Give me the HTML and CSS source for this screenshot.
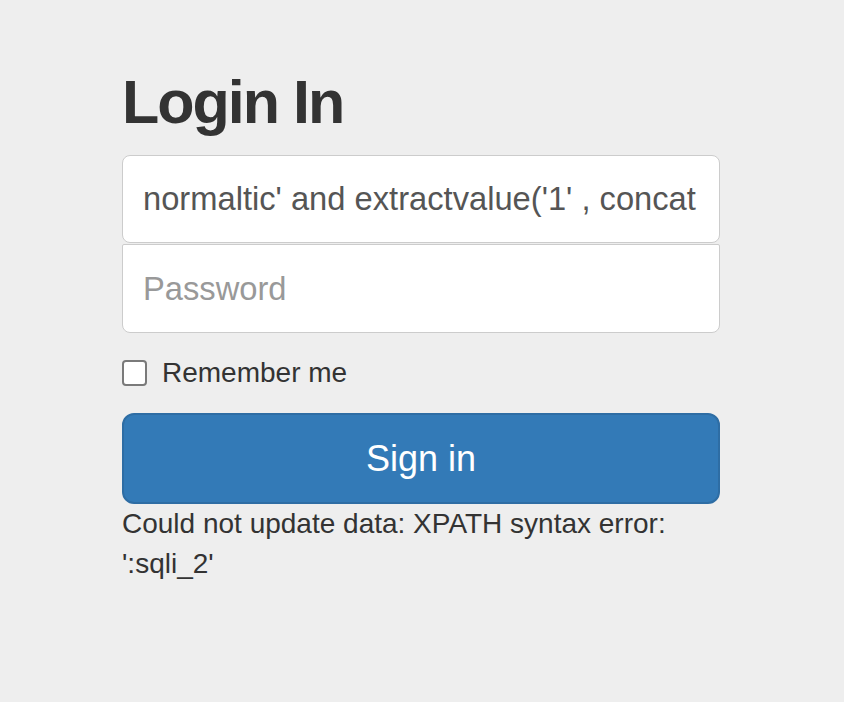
FILE: index.html
```html
<!DOCTYPE html>
<html>
<head>
<meta charset="utf-8">
<link rel="stylesheet" href="styles.css">
</head>
<body>
<div class="container">
  <form class="form-signin">
    <h2 class="heading">Login In</h2>
    <input class="field field-top" type="text" value="normaltic' and extractvalue('1' , concat">
    <input class="field field-bottom" type="password" placeholder="Password">
    <div class="checkbox">
      <label class="check-label"><input class="check" type="checkbox"><span>Remember me</span></label>
    </div>
    <button class="btn" type="button">Sign in</button>
    <div class="message">Could not update data: XPATH syntax error: ':sqli_2'</div>
  </form>
</div>
</body>
</html>
```
FILE: styles.css
```css
html, body {
  margin: 0;
  padding: 0;
  background: #eeeeee;
}
body {
  font-family: "Liberation Sans", Arial, sans-serif;
  font-size: 28px;
  line-height: 40px;
  color: #333333;
}
.container {
  padding: 29px 124px 0 122px;
}
.form-signin {
  width: 598px;
  display: flex;
  flex-direction: column;
}
.heading {
  margin: 40px 0 20px 0;
  font-size: 61px;
  line-height: 66px;
  font-weight: 700;
  letter-spacing: -2px;
  color: #333333;
}
.field {
  box-sizing: border-box;
  width: 598px;
  height: 88px;
  padding: 20px 18px 20px 20px;
  font-family: "Liberation Sans", Arial, sans-serif;
  font-size: 32.7px;
  color: #555555;
  background: #ffffff;
  border: 1.5px solid #cccccc;
  border-radius: 8px;
  outline: none;
  margin: 0;
}
.field::placeholder {
  color: #999999;
}
.field-bottom {
  margin-top: 1px;
  height: 89px;
  border-top-left-radius: 2px;
  border-top-right-radius: 2px;
}
.checkbox {
  margin: 20px 0 20px 0;
  height: 40px;
}
.check-label {
  display: flex;
  align-items: center;
  height: 40px;
  gap: 15px;
}
.check {
  appearance: none;
  -webkit-appearance: none;
  margin: 0;
  width: 25px;
  height: 26px;
  box-sizing: border-box;
  background: #ffffff;
  border: 2px solid #7a7a7a;
  border-radius: 4px;
}
.btn {
  box-sizing: border-box;
  width: 598px;
  height: 91px;
  padding: 20px 32px;
  font-family: "Liberation Sans", Arial, sans-serif;
  font-size: 36px;
  line-height: 48px;
  color: #ffffff;
  background: #337ab7;
  border: 2px solid #2e6da4;
  border-radius: 12px;
}
.message {
  font-size: 28px;
  line-height: 40px;
  color: #333333;
}
```
